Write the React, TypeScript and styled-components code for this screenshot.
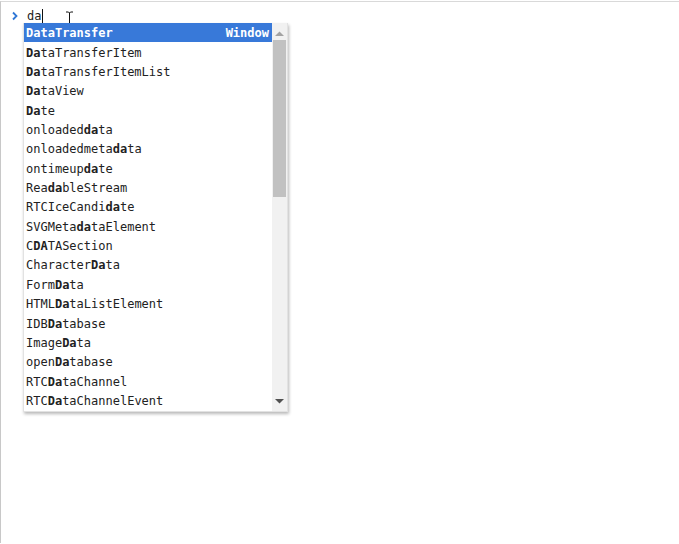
import React from 'react';
import styled, { createGlobalStyle } from 'styled-components';

const query = 'da';

const items: string[] = [
  'DataTransfer',
  'DataTransferItem',
  'DataTransferItemList',
  'DataView',
  'Date',
  'onloadeddata',
  'onloadedmetadata',
  'ontimeupdate',
  'ReadableStream',
  'RTCIceCandidate',
  'SVGMetadataElement',
  'CDATASection',
  'CharacterData',
  'FormData',
  'HTMLDataListElement',
  'IDBDatabase',
  'ImageData',
  'openDatabase',
  'RTCDataChannel',
  'RTCDataChannelEvent',
];

// split a suggestion so the matched part can be bolded
const splitMatch = (text: string) => {
  const i = text.toLowerCase().indexOf(query);
  if (i < 0) return [text, '', ''];
  return [text.slice(0, i), text.slice(i, i + query.length), text.slice(i + query.length)];
};

const App: React.FC = () => {
  return (
    <>
      <GlobalStyle />
      <Console>
        <PromptRow>
          <Chevron viewBox="0 0 8 10">
            <path d="M2 1.5 L5.5 5 L2 8.5" fill="none" stroke="#2f77d6" strokeWidth="1.8" />
          </Chevron>
          <PromptText>da</PromptText>
          <Caret />
        </PromptRow>

        <MouseCursor viewBox="0 0 9 17">
          <path d="M1 1 H3.5 L4.5 2 L5.5 1 H8 M4.5 2 V15 M1 16 H3.5 L4.5 15 L5.5 16 H8" fill="none" stroke="#fff" strokeWidth="2.4" />
          <path d="M1 1 H3.5 L4.5 2 L5.5 1 H8 M4.5 2 V15 M1 16 H3.5 L4.5 15 L5.5 16 H8" fill="none" stroke="#111" strokeWidth="1" />
        </MouseCursor>

        <SuggestBox>
          <List>
            {items.map((item, idx) => {
              const [pre, hit, post] = splitMatch(item);
              return (
                <Row key={item} $selected={idx === 0}>
                  <Label>
                    {pre}
                    <Match>{hit}</Match>
                    {post}
                  </Label>
                  {idx === 0 && <Subtitle>Window</Subtitle>}
                </Row>
              );
            })}
          </List>
          <Scrollbar>
            <Arrow viewBox="0 0 9 5" $dim>
              <path d="M0 5 L4.5 0.5 L9 5 Z" fill="#a3a3a3" />
            </Arrow>
            <Track>
              <Thumb />
            </Track>
            <Arrow viewBox="0 0 9 5">
              <path d="M0 0 L4.5 4.5 L9 0 Z" fill="#505050" />
            </Arrow>
          </Scrollbar>
        </SuggestBox>
      </Console>
    </>
  );
};

export default App;

const GlobalStyle = createGlobalStyle`
  html, body {
    margin: 0;
    background: #fff;
  }
  body {
    font-family: "DejaVu Sans Mono", "Liberation Mono", monospace;
  }
`;

const Console = styled.div`
  position: relative;
  height: 542px;
  margin-top: 1px;
  border-top: 1px solid #d9d9d9;
  border-left: 1px solid #c8c8c8;
  box-sizing: border-box;
`;

const PromptRow = styled.div`
  display: flex;
  align-items: center;
  height: 20px;
  padding: 4px 0 0 10px;
`;

const Chevron = styled.svg`
  width: 8px;
  height: 10px;
  margin-right: 8px;
`;

const PromptText = styled.span`
  font-size: 12px;
  color: #222;
  line-height: 14px;
`;

const Caret = styled.span`
  width: 1px;
  height: 14px;
  background: #111;
  margin-left: 1px;
`;

const MouseCursor = styled.svg`
  position: absolute;
  left: 64px;
  top: 9px;
  width: 9px;
  height: 17px;
  overflow: visible;
`;

const SuggestBox = styled.div`
  position: absolute;
  left: 22px;
  top: 21px;
  display: flex;
  width: 263px;
  height: 388px;
  background: #fff;
  border: 1px solid #e2e2e2;
  border-top: none;
  box-shadow: 1px 2px 3px rgba(0, 0, 0, 0.28);
`;

const List = styled.div`
  flex: 1;
  display: flex;
  flex-direction: column;
`;

const Row = styled.div<{ $selected?: boolean }>`
  display: flex;
  align-items: center;
  justify-content: space-between;
  height: 19.37px;
  padding: 1px 3px 0 2px;
  box-sizing: border-box;
  font-size: 12px;
  color: ${(p) => (p.$selected ? '#fff' : '#222')};
  background: ${(p) => (p.$selected ? '#3879d9' : 'transparent')};
  font-weight: ${(p) => (p.$selected ? 700 : 400)};
  white-space: nowrap;
`;

const Label = styled.span``;

const Match = styled.b`
  font-weight: 700;
`;

const Subtitle = styled.span`
  font-weight: 700;
`;

const Scrollbar = styled.div`
  width: 15px;
  display: flex;
  flex-direction: column;
  align-items: center;
  background: #f1f1f1;
`;

const Arrow = styled.svg<{ $dim?: boolean }>`
  width: 9px;
  height: 5px;
  margin: ${(p) => (p.$dim ? '8px 0 4px' : '4px 0 7px')};
`;

const Track = styled.div`
  flex: 1;
  width: 100%;
  display: flex;
  justify-content: center;
`;

const Thumb = styled.div`
  width: 13px;
  height: 157px;
  background: #c1c1c1;
`;
